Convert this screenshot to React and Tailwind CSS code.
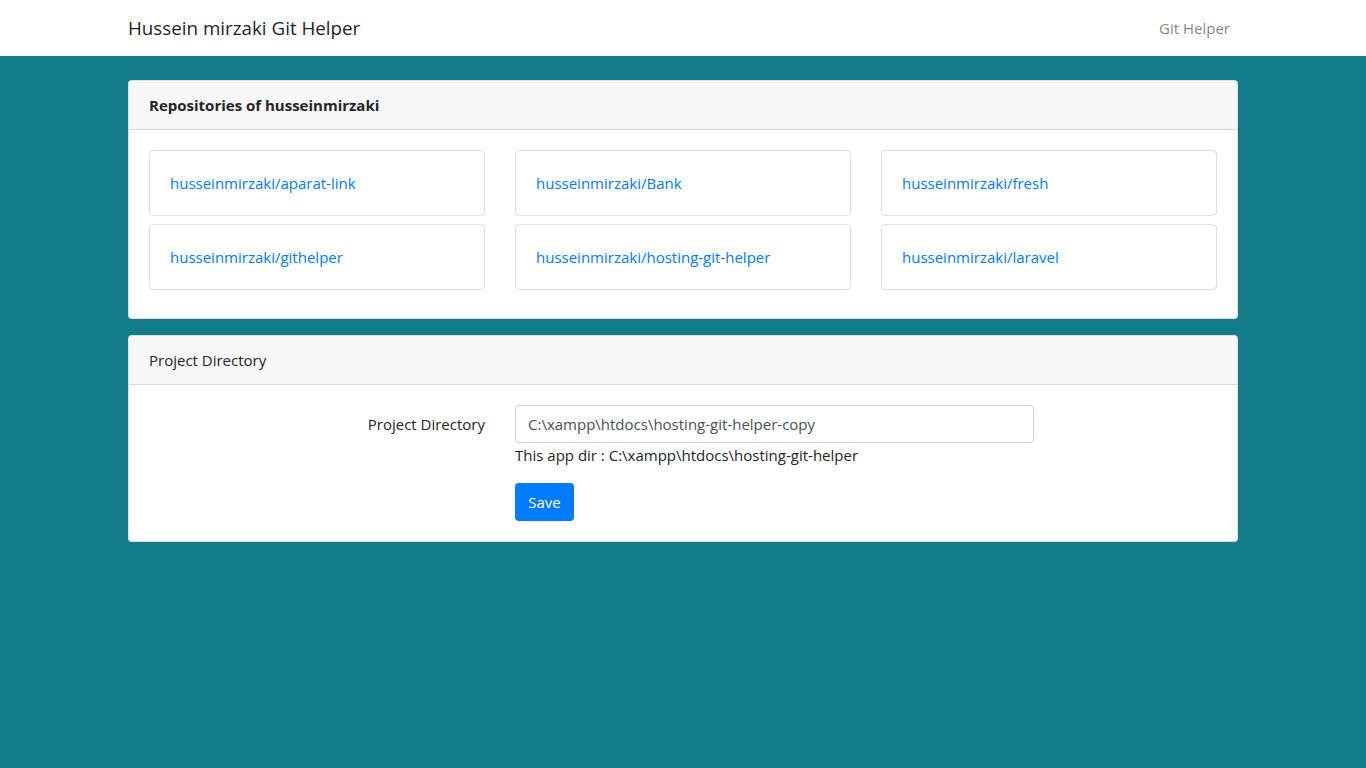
import React from "react";

const repos = [
  "husseinmirzaki/aparat-link",
  "husseinmirzaki/Bank",
  "husseinmirzaki/fresh",
  "husseinmirzaki/githelper",
  "husseinmirzaki/hosting-git-helper",
  "husseinmirzaki/laravel",
];

const App = () => {
  return (
    <div
      className="min-h-screen bg-[#127c8b] text-[#212529] text-[15px] leading-[24px]"
      style={{ fontFamily: '"Open Sans", "Noto Sans", sans-serif' }}
    >
      <nav className="bg-white h-[56px]">
        <div className="w-[1140px] mx-auto px-[15px] h-full flex items-center justify-between">
          <a href="#" className="text-[18.8px] leading-[30px] text-[rgba(0,0,0,0.9)]">
            Hussein mirzaki Git Helper
          </a>
          <a href="#" className="px-2 text-[rgba(0,0,0,0.5)]">
            Git Helper
          </a>
        </div>
      </nav>

      <div className="w-[1140px] mx-auto px-[15px] pt-6">
        {/* Repositories */}
        <div className="bg-white rounded border border-[rgba(0,0,0,0.125)]">
          <div className="bg-[#f7f7f7] px-5 py-3 border-b border-[rgba(0,0,0,0.125)] font-bold">
            Repositories of husseinmirzaki
          </div>
          <div className="p-5">
            <div className="grid grid-cols-3 gap-x-[30px] gap-y-2">
              {repos.map((r) => (
                <div
                  key={r}
                  className="rounded border border-[rgba(0,0,0,0.125)] px-5 py-5"
                >
                  <a href="#" className="text-[#007bff]">
                    {r}
                  </a>
                </div>
              ))}
            </div>
            <div className="h-2" />
          </div>
        </div>

        {/* Project Directory */}
        <div className="bg-white rounded border border-[rgba(0,0,0,0.125)] mt-4">
          <div className="bg-[#f7f7f7] px-5 py-3 border-b border-[rgba(0,0,0,0.125)]">
            Project Directory
          </div>
          <div className="p-5">
            <div className="flex -mx-[15px]">
              <label className="w-1/3 px-[15px] text-right py-[7px]">
                Project Directory
              </label>
              <div className="w-1/2 px-[15px]">
                <input
                  type="text"
                  defaultValue="C:\xampp\htdocs\hosting-git-helper-copy"
                  className="w-full h-[38px] px-3 border border-[#ced4da] rounded text-[#495057] outline-none"
                />
                <div>This app dir : C:\xampp\htdocs\hosting-git-helper</div>
                <button className="mt-4 bg-[#007bff] text-white rounded px-3 h-[38px] w-[59px]">
                  Save
                </button>
              </div>
            </div>
          </div>
        </div>
      </div>
    </div>
  );
};

export default App;
